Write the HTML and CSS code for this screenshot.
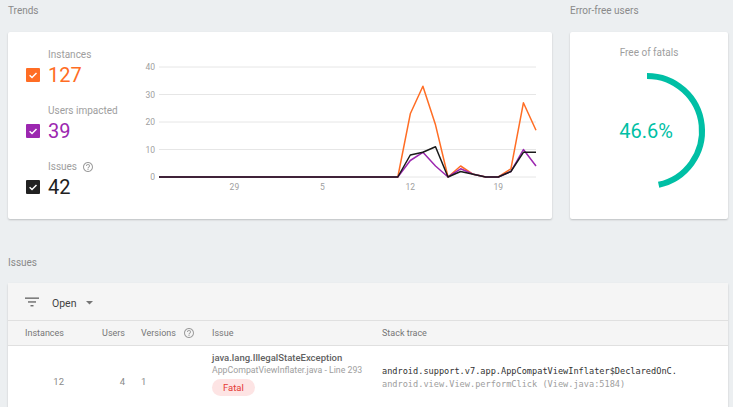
FILE: index.html
```html
<!DOCTYPE html>
<html lang="en">
<head>
<meta charset="utf-8">
<title>Dashboard</title>
<link rel="stylesheet" href="styles.css">
</head>
<body>
<div class="page">
  <div class="top">
    <section>
      <div class="section-title">Trends</div>
      <div class="card trends-card">
        <div class="legend">
          <div class="legend-item">
            <div class="legend-label">Instances</div>
            <svg class="check" width="14" height="14" viewBox="0 0 14 14"><rect width="14" height="14" rx="1" fill="#ff6d24"/><polyline points="3.6,7.3 6,9.6 10.5,4.9" fill="none" stroke="#fff" stroke-width="1.4"/></svg>
            <div class="legend-value orange">127</div>
          </div>
          <div class="legend-item">
            <div class="legend-label">Users impacted</div>
            <svg class="check" width="14" height="14" viewBox="0 0 14 14"><rect width="14" height="14" rx="1" fill="#9c27b0"/><polyline points="3.6,7.3 6,9.6 10.5,4.9" fill="none" stroke="#fff" stroke-width="1.4"/></svg>
            <div class="legend-value purple">39</div>
          </div>
          <div class="legend-item">
            <div class="legend-label">Issues <svg class="help" width="12" height="12" viewBox="0 0 24 24"><path fill="#9e9e9e" d="M11 18h2v-2h-2v2zm1-16C6.48 2 2 6.48 2 12s4.48 10 10 10 10-4.48 10-10S17.52 2 12 2zm0 18c-4.41 0-8-3.59-8-8s3.59-8 8-8 8 3.59 8 8-3.59 8-8 8zm0-14c-2.21 0-4 1.79-4 4h2c0-1.1.9-2 2-2s2 .9 2 2c0 2-3 1.75-3 5h2c0-2.25 3-2.5 3-5 0-2.21-1.79-4-4-4z"/></svg></div>
            <svg class="check" width="14" height="14" viewBox="0 0 14 14"><rect width="14" height="14" rx="1" fill="#212121"/><polyline points="3.6,7.3 6,9.6 10.5,4.9" fill="none" stroke="#fff" stroke-width="1.4"/></svg>
            <div class="legend-value dark">42</div>
          </div>
        </div>
        <svg class="chart" width="400" height="150" viewBox="0 0 400 150">
          <g stroke="#e6e6e6" stroke-width="1">
            <line x1="19" y1="17" x2="396" y2="17"/>
            <line x1="19" y1="44.5" x2="396" y2="44.5"/>
            <line x1="19" y1="72" x2="396" y2="72"/>
            <line x1="19" y1="99.5" x2="396" y2="99.5"/>
            <line x1="19" y1="127" x2="396" y2="127"/>
          </g>
          <g class="axis" text-anchor="end">
            <text x="15" y="20">40</text>
            <text x="15" y="47.5">30</text>
            <text x="15" y="75">20</text>
            <text x="15" y="102.5">10</text>
            <text x="15" y="130">0</text>
          </g>
          <g class="axis" text-anchor="middle">
            <text x="94.4" y="140">29</text>
            <text x="182.4" y="140">5</text>
            <text x="270.3" y="140">12</text>
            <text x="358.3" y="140">19</text>
          </g>
          <polyline fill="none" stroke="#ff6d24" stroke-width="1.5" stroke-linejoin="round" points="19,127 257.8,127 270.3,63.8 282.9,36.3 295.5,74.8 308,127 320.6,116 333.2,124.3 345.7,127 358.3,127 370.9,118.8 383.4,52.8 396,80.3"/>
          <polyline fill="none" stroke="#9c27b0" stroke-width="1.5" stroke-linejoin="round" points="19,127 257.8,127 270.3,110.5 282.9,102.3 295.5,116 308,127 320.6,118.8 333.2,124.3 345.7,127 358.3,127 370.9,121.5 383.4,99.5 396,116"/>
          <polyline fill="none" stroke="#1a1a1a" stroke-width="1.5" stroke-linejoin="round" points="19,127 257.8,127 270.3,105 282.9,102.3 295.5,96.8 308,127 320.6,121.5 333.2,124.3 345.7,127 358.3,127 370.9,121.5 383.4,102.3 396,102.3"/>
        </svg>
      </div>
    </section>
    <section>
      <div class="section-title">Error-free users</div>
      <div class="card error-card">
        <div class="gauge-title">Free of fatals</div>
        <svg class="gauge" width="158" height="150" viewBox="0 0 158 150">
          <path d="M77 19 A55 55 0 0 1 88.63 127.76" fill="none" stroke="#00bfa5" stroke-width="6"/>
          <text x="76" y="81" text-anchor="middle" class="gauge-value">46.6%</text>
        </svg>
      </div>
    </section>
  </div>

  <section class="issues-section">
    <div class="section-title issues-title">Issues</div>
    <div class="card issues-card">
      <div class="toolbar">
        <svg class="filter" width="14" height="10" viewBox="0 0 14 10"><rect x="0" y="0.5" width="14" height="1.3" fill="#616161"/><rect x="3" y="4.3" width="8" height="1.3" fill="#616161"/><rect x="5.5" y="8.1" width="3" height="1.3" fill="#616161"/></svg>
        <span class="open">Open</span>
        <svg class="caret" width="7" height="4" viewBox="0 0 7 4"><polygon points="0,0 7,0 3.5,3.6" fill="#757575"/></svg>
      </div>
      <div class="row head">
        <div class="c-num">Instances</div>
        <div class="c-num">Users</div>
        <div class="c-ver">Versions <svg class="help" width="12" height="12" viewBox="0 0 24 24"><path fill="#9e9e9e" d="M11 18h2v-2h-2v2zm1-16C6.48 2 2 6.48 2 12s4.48 10 10 10 10-4.48 10-10S17.52 2 12 2zm0 18c-4.41 0-8-3.59-8-8s3.59-8 8-8 8 3.59 8 8-3.59 8-8 8zm0-14c-2.21 0-4 1.79-4 4h2c0-1.1.9-2 2-2s2 .9 2 2c0 2-3 1.75-3 5h2c0-2.25 3-2.5 3-5 0-2.21-1.79-4-4-4z"/></svg></div>
        <div>Issue</div>
        <div>Stack trace</div>
      </div>
      <div class="row data">
        <div class="c-num">12</div>
        <div class="c-num">4</div>
        <div class="c-ver">1</div>
        <div class="issue">
          <div class="issue-title">java.lang.IllegalStateException</div>
          <div class="issue-sub">AppCompatViewInflater.java - Line 293</div>
          <span class="chip">Fatal</span>
        </div>
        <div class="stack">
          <div class="stack-main">android.support.v7.app.AppCompatViewInflater$DeclaredOnC.</div>
          <div class="stack-sub">android.view.View.performClick (View.java:5184)</div>
        </div>
      </div>
    </div>
  </section>
</div>
</body>
</html>
```
FILE: styles.css
```css
html, body {
  margin: 0;
  padding: 0;
  height: 100%;
  overflow: hidden;
}
body {
  background: #eceff1;
  font-family: Roboto, "Liberation Sans", sans-serif;
  color: #424242;
}
.page {
  padding: 5px 5px 0 8px;
}
.section-title {
  font-size: 10px;
  line-height: 12px;
  height: 12px;
  color: #8a8a8a;
  margin-bottom: 15px;
}
.top {
  display: grid;
  grid-template-columns: 544px 158px;
  column-gap: 18px;
}
.card {
  background: #fff;
  border-radius: 2px;
  box-shadow: 0 1px 2px rgba(0, 0, 0, 0.2);
}
.trends-card {
  box-sizing: border-box;
  height: 187px;
  display: flex;
  padding: 17px 0 0 18px;
}
.legend {
  width: 114px;
  flex: none;
}
.legend-item {
  display: grid;
  grid-template-columns: 14px auto;
  column-gap: 8px;
  align-items: center;
  margin-bottom: 19px;
}
.legend-label {
  grid-column: 2;
  font-size: 10px;
  line-height: 12px;
  color: #9e9e9e;
  margin-bottom: 3px;
  display: flex;
  align-items: center;
  white-space: nowrap;
}
.legend-label .help {
  margin-left: 5px;
}
.check {
  display: block;
}
.legend-value {
  font-size: 20px;
  line-height: 22px;
}
.orange { color: #ff6d24; }
.purple { color: #9c27b0; }
.dark { color: #212121; }
.chart {
  display: block;
  margin-top: 1px;
  flex: none;
}
.axis {
  font-size: 8.5px;
  fill: #a0a0a0;
  font-family: Roboto, "Liberation Sans", sans-serif;
}
.error-card {
  box-sizing: border-box;
  height: 187px;
  padding-top: 15px;
}
.gauge-title {
  text-align: center;
  font-size: 10px;
  line-height: 12px;
  color: #9e9e9e;
  margin-bottom: -2px;
}
.gauge {
  display: block;
}
.gauge-value {
  font-size: 20px;
  fill: #00bfa5;
  font-family: Roboto, "Liberation Sans", sans-serif;
}
.issues-section {
  margin-top: 38px;
}
.issues-title {
  margin-bottom: 14px;
}
.issues-card {
  border-radius: 2px 2px 0 0;
}
.toolbar {
  box-sizing: border-box;
  height: 38px;
  padding-top: 3px;
  background: #f5f5f5;
  border-bottom: 1px solid #e0e0e0;
  display: flex;
  align-items: center;
  padding-left: 17px;
}
.filter {
  display: block;
  margin-top: -3px;
}
.open {
  margin-left: 13px;
  font-size: 10.5px;
  color: #424242;
}
.caret {
  display: block;
  margin-left: 9px;
}
.row {
  display: grid;
  grid-template-columns: 56px 45px 55px 154px 1fr;
  column-gap: 16px;
}
.head {
  height: 24px;
  align-items: center;
  background: #f5f5f5;
  border-bottom: 1px solid #e0e0e0;
  font-size: 9px;
  color: #757575;
}
.c-num {
  text-align: right;
}
.c-ver {
  display: flex;
  align-items: center;
}
.c-ver .help {
  margin-left: 7px;
}
.data {
  align-items: start;
  padding: 6px 0 24px;
  font-size: 9.5px;
  color: #8a8a8a;
  background: #fff;
}
.data .c-num,
.data .c-ver {
  padding-top: 24px;
  line-height: 12px;
}
.issue-title {
  font-size: 9.5px;
  line-height: 12px;
  font-weight: 500;
  color: #616161;
  white-space: nowrap;
}
.issue-sub {
  font-size: 8.75px;
  line-height: 12px;
  color: #9e9e9e;
  white-space: nowrap;
}
.chip {
  display: inline-block;
  margin-top: 3px;
  height: 17px;
  line-height: 17px;
  padding: 0 11px;
  border-radius: 9px;
  background: #fde4e4;
  color: #e53935;
  font-size: 9.5px;
}
.stack {
  font-family: "DejaVu Sans Mono", "Liberation Mono", monospace;
  font-size: 8.6px;
  line-height: 12.7px;
  white-space: nowrap;
  padding-top: 13px;
}
.stack-main {
  color: #333;
}
.stack-sub {
  color: #9e9e9e;
}
```
